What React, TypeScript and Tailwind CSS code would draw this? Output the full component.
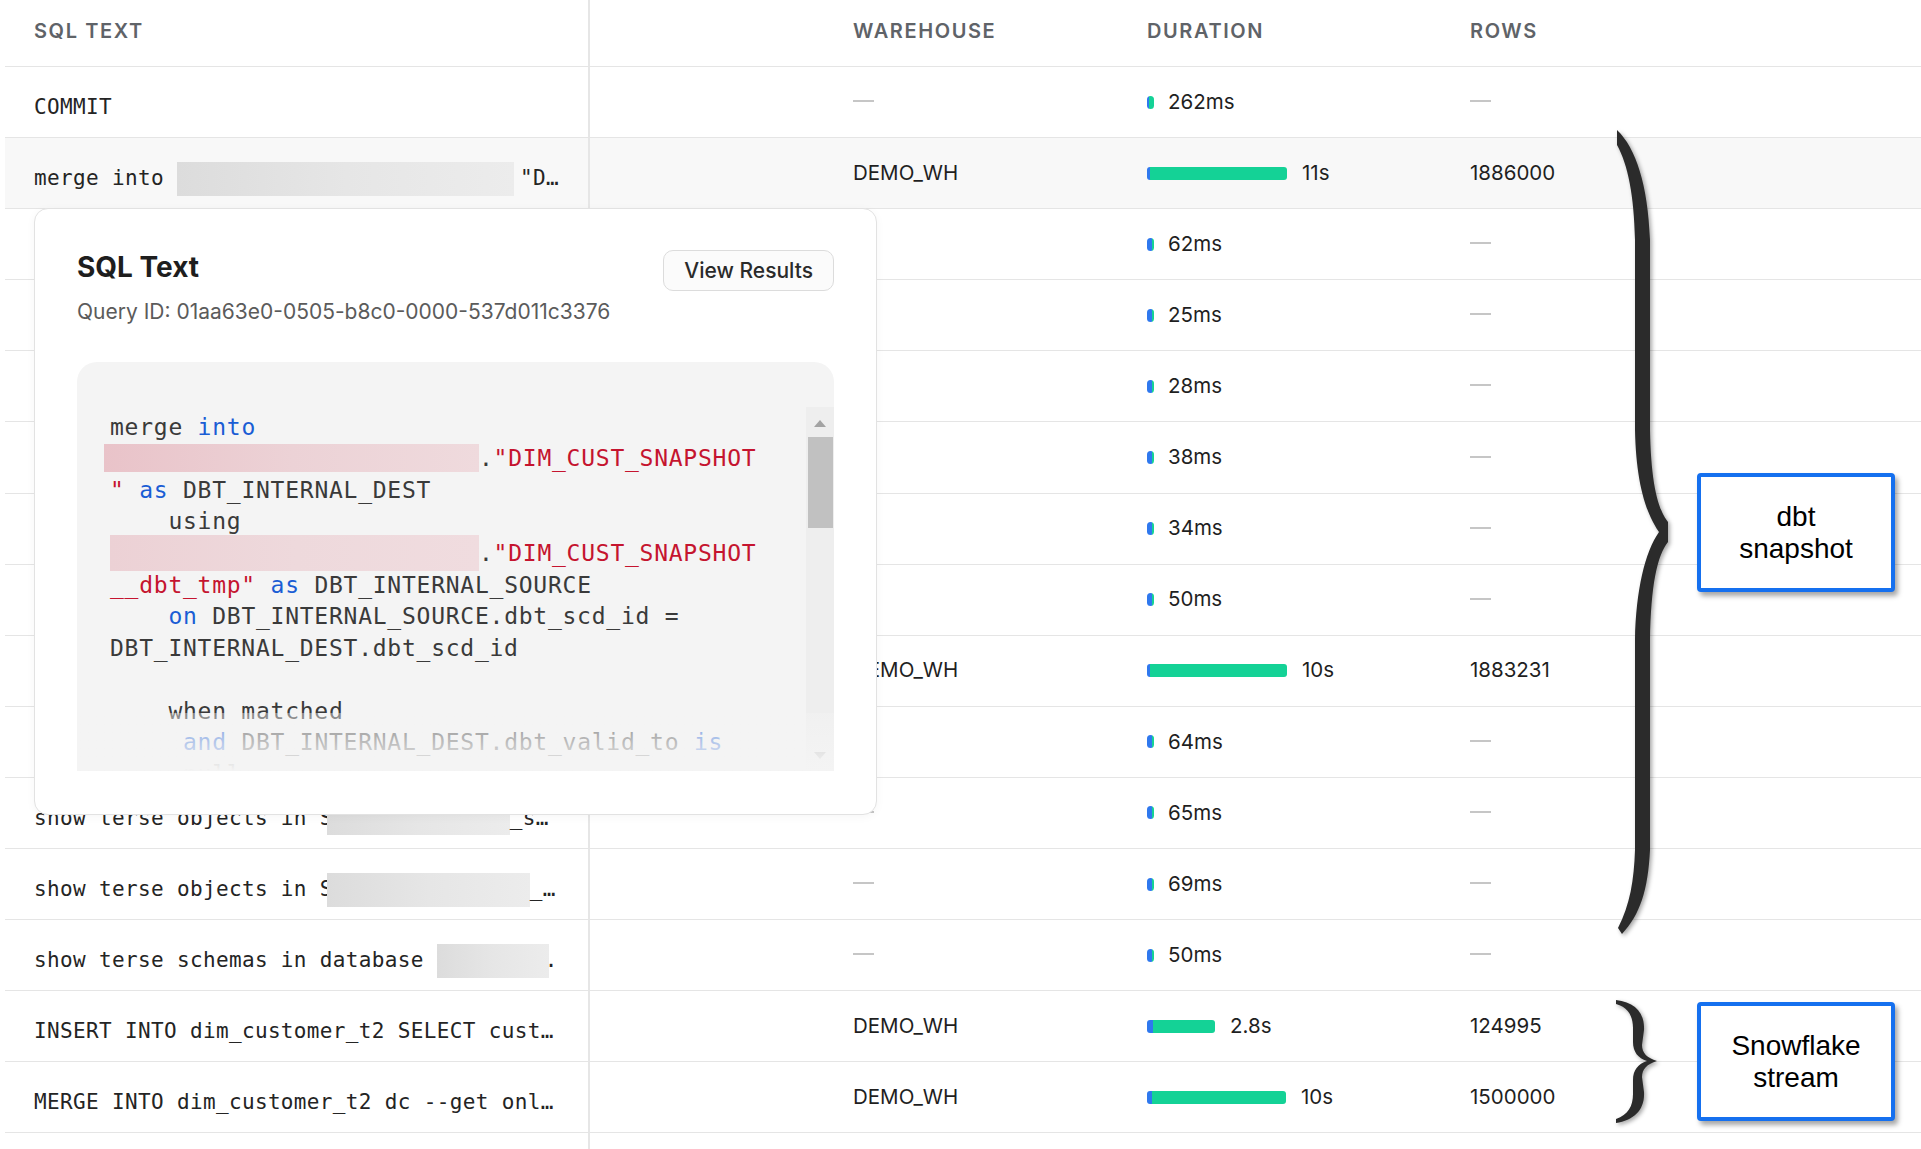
import React from 'react';

type Row = {
  sql: React.ReactNode;
  wh?: string;
  dur: string;
  bar?: number;
  blue?: number;
  pillGreen?: boolean;
  rows?: string;
  hover?: boolean;
};

const Redact = ({ w, className = '' }: { w: number; className?: string }) => (
  <span
    className={`inline-block h-[34px] bg-gradient-to-r from-[#dcdcdc] via-[#e6e6e6] to-[#ececec] ${className}`}
    style={{ width: w }}
  />
);

const rows: Row[] = [
  { sql: <span>COMMIT</span>, dur: '262ms', pillGreen: true },
  {
    sql: (
      <>
        <span>merge into </span>
        <Redact w={337} />
        <span className="ml-[6px]">"D…</span>
      </>
    ),
    wh: 'DEMO_WH',
    dur: '11s',
    bar: 140,
    blue: 3,
    rows: '1886000',
    hover: true,
  },
  { sql: <span>show terse objects in SCHEMA…</span>, dur: '62ms' },
  { sql: <span>show terse objects in SCHEMA…</span>, dur: '25ms' },
  { sql: <span>show terse schemas in database…</span>, dur: '28ms' },
  { sql: <span>show terse objects in SCHEMA…</span>, dur: '38ms' },
  { sql: <span>show terse objects in SCHEMA…</span>, dur: '34ms' },
  { sql: <span>show terse schemas in database…</span>, dur: '50ms' },
  { sql: <span>merge into DIM_CUST_SNAPSHOT…</span>, wh: 'DEMO_WH', dur: '10s', bar: 140, blue: 3, rows: '1883231' },
  { sql: <span>show terse objects in SCHEMA…</span>, dur: '64ms' },
  {
    sql: (
      <>
        <span>show terse objects in S</span>
        <Redact w={183} className="-ml-[6px] h-[30px]" />
        <span>_s…</span>
      </>
    ),
    dur: '65ms',
  },
  {
    sql: (
      <>
        <span>show terse objects in S</span>
        <Redact w={203} className="-ml-[6px]" />
        <span>_…</span>
      </>
    ),
    dur: '69ms',
  },
  {
    sql: (
      <>
        <span>show terse schemas in database </span>
        <Redact w={112} className="h-[20px]" />
        <span className="-ml-[4px]">.</span>
      </>
    ),
    dur: '50ms',
  },
  { sql: <span>INSERT INTO dim_customer_t2 SELECT cust…</span>, wh: 'DEMO_WH', dur: '2.8s', bar: 68, blue: 6, rows: '124995' },
  { sql: <span>MERGE INTO dim_customer_t2 dc --get onl…</span>, wh: 'DEMO_WH', dur: '10s', bar: 139, blue: 5, rows: '1500000' },
  { sql: <span></span>, dur: '' },
];

const Dash = () => <div className="w-[21px] h-[2px] bg-[#c6c6c6] -mt-[2px]" />;

function Duration({ r }: { r: Row }) {
  if (!r.dur) return null;
  return (
    <div className="flex items-center">
      {r.bar ? (
        <div className="flex h-[13px] rounded-[3px] overflow-hidden" style={{ width: r.bar }}>
          <div className="bg-[#2f78ee]" style={{ width: r.blue }} />
          <div className="flex-1 bg-[#14d296]" />
        </div>
      ) : (
        <div className="flex w-[7px] h-[13px] rounded-full overflow-hidden">
          {r.pillGreen ? (
            <>
              <div className="w-[2px] bg-[#2f78ee]" />
              <div className="flex-1 bg-[#14d296]" />
            </>
          ) : (
            <>
              <div className="w-[5px] bg-[#2f78ee]" />
              <div className="flex-1 bg-[#14d296]" />
            </>
          )}
        </div>
      )}
      <span className={r.bar ? 'ml-[15px]' : 'ml-[14px]'}>{r.dur}</span>
    </div>
  );
}

const K = 'text-[#1a5dd4]';
const S = 'text-[#c5142f]';

function CodeLine({ children, className = '' }: { children?: React.ReactNode; className?: string }) {
  return <div className={`h-[31.6px] flex items-center whitespace-pre ${className}`}>{children}</div>;
}

export default function App() {
  return (
    <div className="relative w-[1921px] h-[1149px] overflow-hidden bg-white font-['Inter',sans-serif] text-[#1f1f1f]">
      {/* Table */}
      <div className="ml-[5px]">
        <div className="grid grid-cols-[585px_263px_294px_323px_1fr] h-[67px] border-b border-[#e5e5e5] text-[20px] font-semibold tracking-[0.08em] text-[#5f6368]">
          <div className="flex items-center pl-[29px] pb-[4px] border-r-2 border-[#e6e6e6]">SQL TEXT</div>
          <div />
          <div className="flex items-center pb-[4px]">WAREHOUSE</div>
          <div className="flex items-center pb-[4px]">DURATION</div>
          <div className="flex items-center pb-[4px]">ROWS</div>
        </div>
        {rows.map((r, i) => (
          <div
            key={i}
            className={`grid grid-cols-[585px_263px_294px_323px_1fr] h-[71.1px] border-b border-[#e5e5e5] text-[20.5px] ${r.hover ? 'bg-[#f8f8f8]' : ''}`}
          >
            <div className="flex items-center pl-[29px] pt-[11px] border-r-2 border-[#e6e6e6] whitespace-pre font-['DejaVu_Sans_Mono',monospace] text-[21px] tracking-[0.35px] text-[#242424]">
              {r.sql}
            </div>
            <div />
            <div className="flex items-center">{r.dur ? r.wh ? r.wh : <Dash /> : null}</div>
            <div className="flex items-center">
              <Duration r={r} />
            </div>
            <div className="flex items-center">{r.dur ? r.rows ? r.rows : <Dash /> : null}</div>
          </div>
        ))}
      </div>

      {/* SQL Text popover */}
      <div className="absolute left-[34px] top-[208px] w-[843px] h-[607px] bg-white border border-[#e2e2e2] rounded-[14px] shadow-[0_2px_10px_rgba(0,0,0,0.04)] pt-[41px] px-[42px] z-10">
        <div className="flex justify-between items-start">
          <div>
            <div className="text-[28px] font-bold leading-[34px] text-[#1e1e1e]">SQL Text</div>
            <div className="mt-[14px] text-[21px] leading-[28px] text-[#5b5b5b]">
              Query ID: 01aa63e0-0505-b8c0-0000-537d011c3376
            </div>
          </div>
          <button className="h-[41px] px-[20px] rounded-[10px] border border-[#dcdcdc] bg-[#fbfbfb] text-[21px] font-medium text-[#2a2a2a]">
            View Results
          </button>
        </div>

        <div className="relative mt-[36px] h-[409px] rounded-t-[20px] bg-[#f4f4f4] overflow-hidden pt-[45px] flex">
          <div className="flex-1 pl-[33px] pt-[4px] font-['DejaVu_Sans_Mono',monospace] text-[23px] tracking-[0.75px] text-[#3a3a3a]">
            <CodeLine>
              <span>merge </span>
              <span className={K}>into</span>
            </CodeLine>
            <CodeLine>
              <span className="inline-block w-[375px] h-[28px] -ml-[6px] bg-gradient-to-r from-[#e9c3c9] via-[#ecd2d6] to-[#efdadd]" />
              <span>.</span>
              <span className={S}>"DIM_CUST_SNAPSHOT</span>
            </CodeLine>
            <CodeLine>
              <span className={S}>" </span>
              <span className={K}>as</span>
              <span> DBT_INTERNAL_DEST</span>
            </CodeLine>
            <CodeLine>
              <span>    using</span>
            </CodeLine>
            <CodeLine>
              <span className="inline-block w-[369px] h-[36px] bg-gradient-to-r from-[#ecd1d5] via-[#eed9dc] to-[#f0dcdf]" />
              <span>.</span>
              <span className={S}>"DIM_CUST_SNAPSHOT</span>
            </CodeLine>
            <CodeLine>
              <span className={S}>__dbt_tmp" </span>
              <span className={K}>as</span>
              <span> DBT_INTERNAL_SOURCE</span>
            </CodeLine>
            <CodeLine>
              <span>    </span>
              <span className={K}>on</span>
              <span> DBT_INTERNAL_SOURCE.dbt_scd_id =</span>
            </CodeLine>
            <CodeLine>
              <span>DBT_INTERNAL_DEST.dbt_scd_id</span>
            </CodeLine>
            <CodeLine />
            <CodeLine>
              <span>    when matched</span>
            </CodeLine>
            <CodeLine>
              <span>     </span>
              <span className={K}>and</span>
              <span> DBT_INTERNAL_DEST.dbt_valid_to </span>
              <span className={K}>is</span>
            </CodeLine>
            <CodeLine>
              <span>     null</span>
            </CodeLine>
          </div>

          {/* scrollbar */}
          <div className="relative w-[28px] bg-[#eeeeee] flex flex-col">
            <div className="mt-[13px] self-center w-0 h-0 border-l-[6px] border-r-[6px] border-b-[7px] border-l-transparent border-r-transparent border-b-[#a3a3a3]" />
            <div className="mt-[10px] ml-[2px] w-[25px] h-[91px] bg-[#c1c1c1]" />
            <div className="absolute bottom-[12px] left-[8px] w-0 h-0 border-l-[6px] border-r-[6px] border-t-[7px] border-l-transparent border-r-transparent border-t-[#a3a3a3]" />
          </div>

          <div className="absolute inset-x-0 bottom-0 h-[58px] bg-gradient-to-b from-[#f4f4f4]/40 to-[#f4f4f4]" />
        </div>
      </div>

      {/* Annotations */}
      <svg
        className="absolute left-0 top-0 pointer-events-none z-20 drop-shadow-[2px_2px_2px_rgba(0,0,0,0.35)]"
        width="1921"
        height="1149"
      >
        <path
          fill="#2b2b2b"
          d="M1617,130 C1636,148 1648,185 1650,240 L1650,430 C1651,480 1657,508 1668,522 L1668,542 C1657,556 1651,585 1650,640 L1650,850 C1648,890 1640,915 1622,934 L1618,928 C1630,905 1634,880 1635,850 L1635,640 C1636,590 1645,552 1659,532 C1645,512 1636,480 1635,430 L1635,240 C1634,195 1628,165 1617,145 Z"
        />
        <path
          fill="#2b2b2b"
          d="M1616,1000 C1634,1002 1645,1012 1644,1030 L1642,1045 C1642,1053 1647,1058 1657,1061 C1647,1064 1642,1069 1642,1077 L1644,1092 C1645,1110 1634,1120 1616,1123 L1616,1119 C1628,1115 1633,1106 1633,1094 L1633,1080 C1633,1070 1638,1064 1647,1061 C1638,1058 1633,1052 1633,1042 L1633,1028 C1633,1016 1628,1007 1616,1004 Z"
        />
      </svg>

      <div className="absolute left-[1697px] top-[473px] w-[198px] h-[119px] z-20 border-[4px] border-[#1570ef] rounded-[4px] bg-white shadow-[3px_4px_5px_rgba(0,0,0,0.35)] flex items-center justify-center text-center font-['Liberation_Sans',Arial,sans-serif] text-[28px] leading-[32px] text-black">
        dbt
        <br />
        snapshot
      </div>
      <div className="absolute left-[1697px] top-[1002px] w-[198px] h-[119px] z-20 border-[4px] border-[#1570ef] rounded-[4px] bg-white shadow-[3px_4px_5px_rgba(0,0,0,0.35)] flex items-center justify-center text-center font-['Liberation_Sans',Arial,sans-serif] text-[28px] leading-[32px] text-black">
        Snowflake
        <br />
        stream
      </div>
    </div>
  );
}
